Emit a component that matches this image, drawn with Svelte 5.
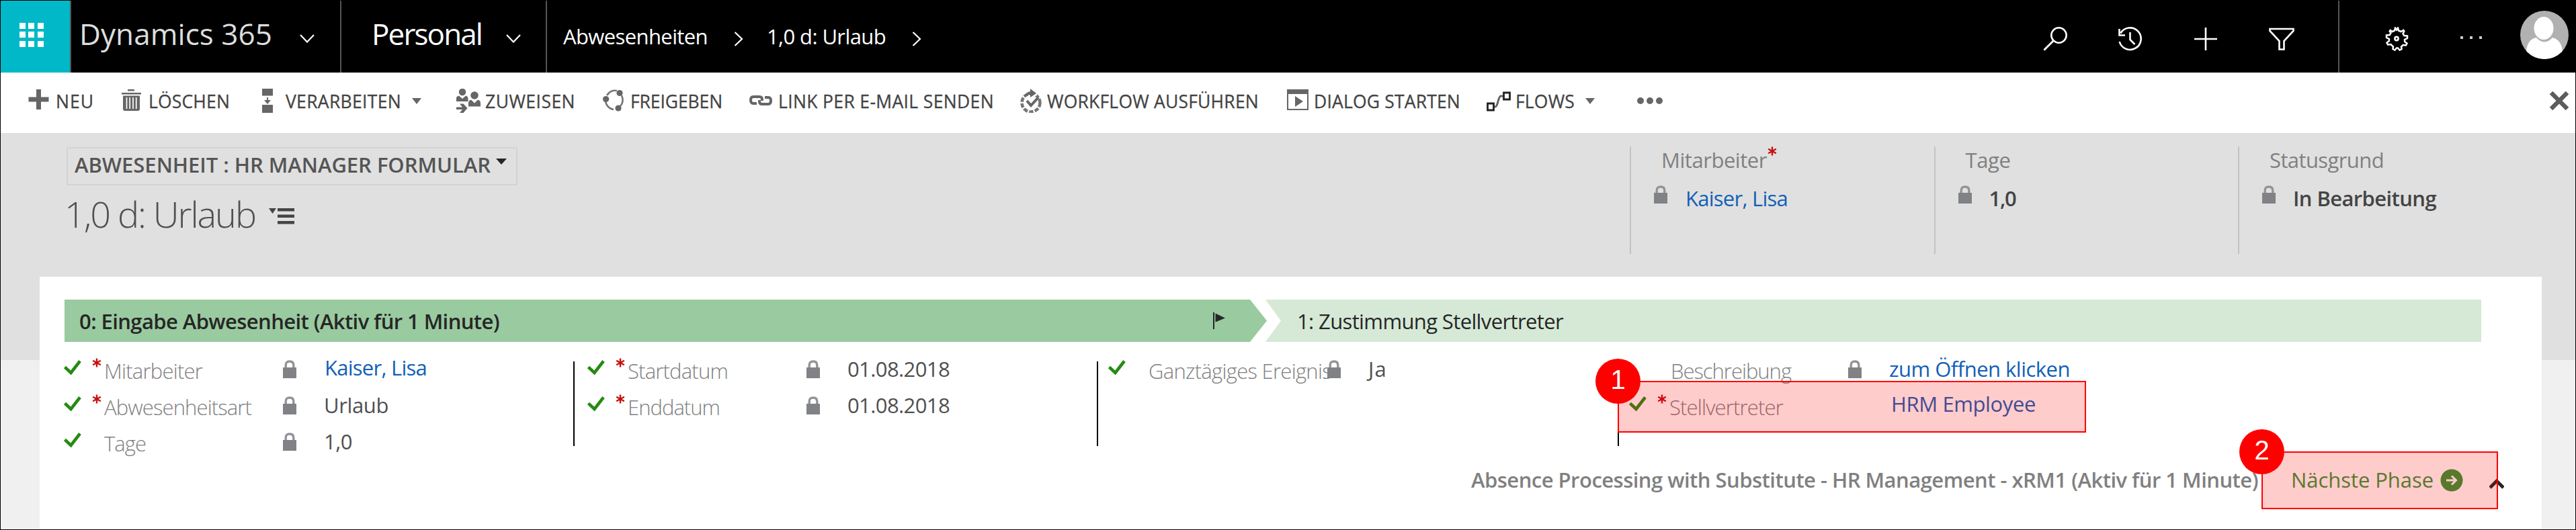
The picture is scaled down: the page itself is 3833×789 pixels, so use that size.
<script lang="ts">
	interface Command {
		icon: string;
		label: string;
		width: number; // whole slot, up to the next command
		iconSlot: number;
		textWidth: number;
		menu?: boolean;
	}

	interface Field {
		label: string;
		labelWidth: number;
		value: string;
		valueWidth: number;
		required?: boolean;
		done?: boolean;
		locked?: boolean;
		link?: boolean;
		indent?: number;
		valueIndent?: number;
		lift?: number;
	}

	const commands: Command[] = [
		{ icon: 'plus', label: 'NEU', width: 139, iconSlot: 41, textWidth: 57 },
		{ icon: 'trash', label: 'LÖSCHEN', width: 209, iconSlot: 40, textWidth: 121 },
		{ icon: 'process', label: 'VERARBEITEN', width: 289, iconSlot: 35, textWidth: 172, menu: true },
		{ icon: 'assign', label: 'ZUWEISEN', width: 218, iconSlot: 43, textWidth: 134 },
		{ icon: 'share', label: 'FREIGEBEN', width: 218, iconSlot: 41, textWidth: 137 },
		{ icon: 'link', label: 'LINK PER E-MAIL SENDEN', width: 403, iconSlot: 43, textWidth: 321 },
		{ icon: 'workflow', label: 'WORKFLOW AUSFÜHREN', width: 397, iconSlot: 40, textWidth: 315 },
		{ icon: 'dialog', label: 'DIALOG STARTEN', width: 297, iconSlot: 40, textWidth: 218 },
		{ icon: 'flow', label: 'FLOWS', width: 224, iconSlot: 43, textWidth: 88, menu: true }
	];

	const headerFields = [
		{ label: 'Mitarbeiter', labelWidth: 157, value: 'Kaiser, Lisa', valueWidth: 152, required: true, link: true },
		{ label: 'Tage', labelWidth: 67, value: '1,0', valueWidth: 40 },
		{ label: 'Statusgrund', labelWidth: 170, value: 'In Bearbeitung', valueWidth: 213 }
	];

	const columns: Field[][] = [
		[
			{ label: 'Mitarbeiter', labelWidth: 146, value: 'Kaiser, Lisa', valueWidth: 152, required: true, done: true, locked: true, link: true, valueIndent: 1, lift: 4 },
			{ label: 'Abwesenheitsart', labelWidth: 219, value: 'Urlaub', valueWidth: 96, required: true, done: true, locked: true },
			{ label: 'Tage', labelWidth: 62, value: '1,0', valueWidth: 42, done: true, locked: true }
		],
		[
			{ label: 'Startdatum', labelWidth: 149, value: '01.08.2018', valueWidth: 152, required: true, done: true, locked: true },
			{ label: 'Enddatum', labelWidth: 137, value: '01.08.2018', valueWidth: 152, required: true, done: true, locked: true }
		],
		[{ label: 'Ganztägiges Ereignis', labelWidth: 272, value: 'Ja', valueWidth: 28, done: true, locked: true }],
		[
			{ label: 'Beschreibung', labelWidth: 179, value: 'zum Öffnen klicken', valueWidth: 269, locked: true, link: true, indent: 2, lift: -1 },
			{ label: 'Stellvertreter', labelWidth: 169, value: 'HRM Employee', valueWidth: 215, required: true, done: true, link: true, valueIndent: 3, lift: 5 }
		]
	];

	// Spreads the letters so that the text takes up the given width
	function fit(node: HTMLElement, width: number) {
		const count = (node.textContent ?? '').length;
		const natural = node.getBoundingClientRect().width;
		node.style.letterSpacing = `${(width - natural) / count}px`;
	}
</script>

{#snippet lock()}
	<svg class="lock" viewBox="0 0 20 27" width="20" height="27">
		<path d="M4.200 12V7.500C4.200 3.700 6.400 2 10 2s5.800 1.700 5.800 5.500V12" fill="none" stroke="#929497" stroke-width="3.400" />
		<path d="M0 11h20v16H0z" fill="#808285" />
	</svg>
{/snippet}

{#snippet asterisk()}
	<svg class="asterisk" viewBox="0 0 14 14" width="14" height="14">
		<path d="M7 .5v13M1.200 3.700l11.600 6.600M12.800 3.700L1.200 10.300" stroke="#c8100c" stroke-width="2.400" />
	</svg>
{/snippet}

{#snippet chevronDown()}
	<svg viewBox="0 0 22 13" width="22" height="13">
		<path d="M1 1l10 10.500L21 1" fill="none" stroke="#fff" stroke-width="2.200" />
	</svg>
{/snippet}

{#snippet chevronRight()}
	<svg viewBox="0 0 14 22" width="14" height="22">
		<path d="M1.500 1L12 11 1.500 21" fill="none" stroke="#fff" stroke-width="2.200" />
	</svg>
{/snippet}

{#snippet commandIcon(name: string)}
	<svg viewBox="0 0 36 36" width="36" height="36" fill="#666">
		{#if name === 'plus'}
			<path d="M12 1h7v11.500h11.500v7H19V31h-7V19.500H.5v-7H12z" />
		{:else if name === 'trash'}
			<path d="M9 1h10v2.500H9zM0 6h29v2.500H0zM2 10.500h25V30q0 3-3 3H5q-3 0-3-3z" />
			<path d="M7.500 13v17M12.200 13v17M17 13v17M21.700 13v17" stroke="#fff" stroke-width="1.700" />
		{:else if name === 'process'}
			<path d="M0 0h16v10.500H0zM0 24h16v12H0zM7 13h2v4h4l-5 6-5-6h4z" />
		{:else if name === 'assign'}
			<circle cx="9" cy="5" r="5.200" />
			<path d="M0 19v-6q1-2 4-2.500l5 4.500 5-4.500q3 .5 3.500 4V19z" />
			<circle cx="27" cy="10" r="5.800" />
			<path d="M18 26.500v-5q0-4 4-5l5 5 5-5q4 1 4 5v5z" />
			<path d="M0 27.500h9L5 22.500h5.500l6 6.500-6 7H5l4-5H0z" />
		{:else if name === 'share'}
			<g fill="none" stroke="#777" stroke-width="2.600">
				<path d="M6 10a14 14 0 0 1 15-7" />
				<path d="M28 10a15 15 0 0 1-2 16" />
				<path d="M16 31A14 14 0 0 1 4 18" />
			</g>
			<circle cx="25" cy="6.500" r="4.600" />
			<circle cx="4.600" cy="15.500" r="4.600" />
			<circle cx="23" cy="29" r="4.600" />
		{:else if name === 'link'}
			<g fill="none" stroke="#666" stroke-width="4">
				<path d="M11 22H6q-4 0-4-5t4-5h9q4 0 4 4v2" />
				<path d="M23 13h5q4 0 4 5t-4 5h-9q-4 0-4-4v-2" />
			</g>
		{:else if name === 'workflow'}
			<circle cx="16" cy="21" r="13.500" fill="none" stroke="#777" stroke-width="4.500" stroke-dasharray="6.500 2.200" />
			<path d="M9 1h16v9l-7 3z" fill="#fff" />
			<path d="M15 0l9 7-9 6V9q-5 0-9 4 2-8 9-9z" />
			<path d="M10 18l6 7 11-12" fill="none" stroke="#666" stroke-width="4" />
		{:else if name === 'dialog'}
			<path d="M1 2h30v29H1z" fill="#fff" stroke="#666" stroke-width="2" />
			<path d="M1 1h30v7H1zM12 11l12 8-12 8z" />
		{:else if name === 'flow'}
			<path d="M10 27h2.500C17 27 17 12 21 11h4" fill="none" stroke="#666" stroke-width="3" />
			<path d="M1.500 22h9v10h-9zM25.500 6h9v10h-9z" fill="#fff" stroke="#222" stroke-width="2.800" />
		{/if}
	</svg>
{/snippet}

<div class="window">
	<header class="topbar">
		<div class="waffle">
			{#each Array(9) as _}
				<i></i>
			{/each}
		</div>
		<div class="product">
			<span class="brand" use:fit={287}>Dynamics 365</span>
			{@render chevronDown()}
		</div>
		<div class="area">
			<span class="area-name" use:fit={164}>Personal</span>
			{@render chevronDown()}
		</div>
		<nav class="crumbs">
			<span class="crumb first" use:fit={215}>Abwesenheiten</span>
			{@render chevronRight()}
			<span class="crumb" use:fit={177}>1,0 d: Urlaub</span>
			{@render chevronRight()}
		</nav>
		<div class="tools">
			<svg viewBox="0 0 36 36" width="36" height="36">
				<ellipse cx="23.500" cy="12.500" rx="11.200" ry="11.200" />
				<path d="M15.500 20.500L1.500 34.500" stroke-width="3" />
			</svg>
			<svg viewBox="0 0 36 36" width="36" height="36">
				<path d="M3.300 9.500A16.300 16.300 0 1 1 1.700 22M1.500 3v9.500H10M17.500 8v11l7 7" />
			</svg>
			<svg viewBox="0 0 36 36" width="36" height="36">
				<path d="M18 1v34M1 18h34" />
			</svg>
			<svg viewBox="0 0 38 34" width="38" height="34">
				<path d="M1.500 2h35v3L22.500 20v12.500h-7V20L1.500 5z" />
			</svg>
		</div>
		<div class="account">
			<svg viewBox="0 0 36 36" width="36" height="36">
				<path d="M15 5.500l1-4 2 3 2-3 1 4 3.500 1.500 3.800-2 1 1.500-1.800 3.600 1.800 3 4.700.4v3.500l-4 2 .2 3 3.300 2.500-1.500 3-4.500-.5-2.500 2.500.5 3.500-3 1.500-2.500-3h-2l-2.500 3-3-1.500.5-3.500L9.500 26 5 26.500l-1.500-3L6.800 21l.2-3-4-2v-3.500l4.700-.4 1.800-3L7.700 6.500 8.700 5l3 2z" stroke-width="2.500" />
				<circle cx="18" cy="17.500" r="2.600" />
			</svg>
			<div class="more-dots"><i></i><i></i><i></i></div>
			<svg class="avatar" viewBox="0 0 72 72" width="72" height="72">
				<defs><clipPath id="face"><circle cx="36" cy="36" r="36" /></clipPath></defs>
				<g clip-path="url(#face)">
					<path d="M0 0h72v72H0z" fill="#b1b1b1" />
					<path d="M9 72V60q2-18 15-20 12 13 24 0 13 3 15 20v12z" fill="#fff" />
					<ellipse cx="35" cy="26" rx="14.500" ry="17" fill="#fff" />
				</g>
			</svg>
		</div>
	</header>

	<div class="commandbar">
		{#each commands as command}
			<div class="command" style="width: {command.width}px">
				<span class="command-icon" style="width: {command.iconSlot}px">{@render commandIcon(command.icon)}</span>
				<span class="command-label" use:fit={command.textWidth}>{command.label}</span>
				{#if command.menu}<i class="caret"></i>{/if}
			</div>
		{/each}
		<div class="overflow"><i></i><i></i><i></i></div>
		<svg class="close" viewBox="0 0 30 30" width="30" height="30">
			<path d="M3 3l24 24M27 3L3 27" stroke="#5c5c5c" stroke-width="6.500" />
		</svg>
	</div>

	<main class="record">
		<section class="record-head">
			<div class="titles">
				<div class="form-selector">
					<span use:fit={619}>ABWESENHEIT : HR MANAGER FORMULAR</span>
					<i class="caret dark"></i>
				</div>
				<div class="title-row">
					<h1 use:fit={284}>1,0 d: Urlaub</h1>
					<svg viewBox="0 0 38 24" width="38" height="24" fill="#444">
						<path d="M0 0h11L5.500 8zM13 0h25v4.500H13zM13 9.500h25V14H13zM13 19h25v4.500H13z" />
					</svg>
				</div>
			</div>
			{#each headerFields as field}
				<div class="head-field">
					<div class="head-label">
						<span use:fit={field.labelWidth}>{field.label}</span>
						{#if field.required}{@render asterisk()}{/if}
					</div>
					<div class="head-value" class:link={field.link}>
						{@render lock()}
						<span use:fit={field.valueWidth}>{field.value}</span>
					</div>
				</div>
			{/each}
		</section>

		<section class="process">
			<div class="stages">
				<div class="stage active">
					<span use:fit={625}>0: Eingabe Abwesenheit (Aktiv für 1 Minute)</span>
					<svg viewBox="0 0 18 25" width="18" height="25" fill="#262626">
						<path d="M0 0h2v25H0zM3.500 1.500L18 8.500 3.500 14.500z" />
					</svg>
				</div>
				<div class="stage next">
					<span use:fit={396}>1: Zustimmung Stellvertreter</span>
				</div>
			</div>

			<div class="columns">
				{#each columns as fields}
					<div class="column">
						{#each fields as field}
							<div class="field">
								<span class="cell">
									{#if field.done}
										<svg class="check" viewBox="0 0 26 22" width="26" height="22">
											<path d="M1.500 10.500L10.500 19 24 1.500" fill="none" stroke="#258b12" stroke-width="4.600" />
										</svg>
									{/if}
								</span>
								<span class="cell">{#if field.required}{@render asterisk()}{/if}</span>
								<span class="field-label" style="padding-left: {field.indent ?? 0}px">
									<span use:fit={field.labelWidth}>{field.label}</span>
								</span>
								<span class="cell">{#if field.locked}{@render lock()}{/if}</span>
								<span
									class="field-value"
									class:link={field.link}
									style="padding: 0 0 {Math.max(field.lift ?? 0, 0)}px {field.valueIndent ?? 0}px"
								>
									<span use:fit={field.valueWidth}>{field.value}</span>
								</span>
							</div>
						{/each}
					</div>
				{/each}
			</div>

			<footer class="process-foot">
				<span class="process-name" use:fit={1171}>Absence Processing with Substitute - HR Management - xRM1 (Aktiv für 1 Minute)</span>
				<span class="advance" use:fit={212}>Nächste Phase</span>
				<svg class="go" viewBox="0 0 34 34" width="34" height="34">
					<circle cx="17" cy="17" r="16.500" fill="#2f9838" />
					<path d="M9 17h14M17 10.500l6.500 6.500-6.500 6.500" fill="none" stroke="#fff" stroke-width="3" />
				</svg>
				<svg class="collapse" viewBox="0 0 22 16" width="22" height="16">
					<path d="M1 14L11 4l10 10" fill="none" stroke="#262626" stroke-width="5" />
				</svg>
			</footer>
		</section>
	</main>

	<!-- Step markers lying over the form -->
	<div class="marker substitute"><b>1</b></div>
	<div class="marker phase"><b>2</b></div>
</div>

<style>
	:global(body) {
		margin: 0;
	}

	.window {
		position: relative;
		display: flex;
		flex-direction: column;
		box-sizing: border-box;
		width: 3833px;
		height: 789px;
		border: 1px solid #000;
		background: #fff;
		color: #444;
		font-family: 'Open Sans', 'Noto Sans', sans-serif;
		font-size: 31px;
		line-height: 42px;
		white-space: nowrap;
	}

	svg {
		display: block;
		flex: none;
	}

	span {
		flex: none;
	}

	/* Top bar */
	.topbar {
		display: flex;
		height: 107px;
		flex: none;
		background: #000;
		color: #fff;
	}

	.waffle {
		display: grid;
		grid-template-columns: repeat(3, 9px);
		grid-auto-rows: 9px;
		gap: 4.5px;
		align-content: center;
		justify-content: center;
		box-sizing: border-box;
		width: 105px;
		padding: 0 12px 6px 0;
		border-right: 2px solid #555;
		background: #00b8c7;
	}

	.waffle i {
		background: #fff;
	}

	.product,
	.area,
	.crumbs {
		display: flex;
		align-items: center;
		box-sizing: border-box;
	}

	.product {
		width: 402px;
		padding-left: 12px;
		border-right: 2px solid #555;
	}

	.product svg,
	.area svg {
		margin-top: 6px;
	}

	.product svg {
		margin-left: 41px;
	}

	.brand {
		padding-bottom: 10px;
		color: #ddd;
		font-size: 44px;
		line-height: 60px;
	}

	.area {
		width: 306px;
		padding-left: 45px;
		border-right: 2px solid #555;
	}

	.area-name {
		padding-bottom: 10px;
		font-size: 44px;
		line-height: 60px;
	}

	.area svg {
		margin-left: 36px;
	}

	.crumbs {
		padding-left: 24px;
	}

	.crumb {
		margin-left: 35px;
		padding-bottom: 2px;
	}

	.crumb.first {
		margin-left: 0;
	}

	.crumbs svg {
		margin: 7px 0 0 39px;
	}

	.tools {
		display: flex;
		gap: 76px;
		align-items: center;
		box-sizing: border-box;
		margin-left: auto;
		padding: 7px 65px 0 0;
		border-right: 2px solid #555;
	}

	.tools svg,
	.account svg {
		fill: none;
		stroke: #fff;
		stroke-width: 2.6;
	}

	.account {
		display: flex;
		align-items: center;
		padding: 0 10px 0 67px;
	}

	.account svg:first-child {
		margin-top: 6px;
	}

	.more-dots {
		display: flex;
		gap: 10px;
		margin: 2px 57px 0 77px;
	}

	.more-dots i {
		width: 4px;
		height: 4px;
		background: #ccc;
	}

	.account .avatar {
		margin-top: -6px;
		stroke: none;
	}

	/* Command bar */
	.commandbar {
		display: flex;
		align-items: center;
		box-sizing: border-box;
		height: 90px;
		flex: none;
		padding: 0 9px 6px 41px;
		background: #fff;
		font-size: 26.5px;
		-webkit-text-stroke: 0.3px #444;
	}

	.command {
		display: flex;
		flex: none;
		align-items: center;
	}

	.command-label {
		padding-top: 2px;
	}

	.caret {
		flex: none;
		width: 0;
		height: 0;
		margin-left: 16px;
		border: 7px solid transparent;
		border-top: 9px solid #666;
		border-bottom: 0;
	}

	.caret.dark {
		margin: -8px 0 0 8px;
		border-width: 9px 8px 0;
		border-top-color: #262626;
	}

	.overflow {
		display: flex;
		gap: 4px;
	}

	.overflow i {
		width: 10px;
		height: 10px;
		border-radius: 50%;
		background: #666;
	}

	.close {
		margin-left: auto;
	}

	/* Record */
	.record {
		flex: 1;
		background: linear-gradient(#e0e0e0 338px, #f0f0f0 338px);
	}

	.record-head {
		display: flex;
		height: 214px;
	}

	.titles {
		box-sizing: border-box;
		width: 2424px;
		padding: 21px 0 0 98px;
	}

	.form-selector {
		display: flex;
		align-items: center;
		box-sizing: border-box;
		width: 671px;
		height: 57px;
		padding: 0 0 6px 10px;
		border: 2px solid #d3d3d3;
		color: #555;
		font-weight: 600;
	}

	.title-row {
		display: flex;
		gap: 20px;
		align-items: center;
	}

	h1 {
		margin: 5px 0 0 -3px;
		color: #505050;
		font-size: 54px;
		font-weight: 300;
		line-height: 74px;
	}

	.title-row svg {
		margin-top: 12px;
	}

	.head-field {
		box-sizing: border-box;
		width: 452.5px;
		height: 160px;
		margin-top: 20px;
		padding-left: 34px;
		border-left: 2px solid #bfc3c6;
	}

	.head-label {
		display: flex;
		height: 36px;
		padding-left: 11px;
		color: #808080;
		line-height: 42px;
	}

	.head-label span {
		margin-top: -1px;
	}

	.head-label .asterisk {
		margin-left: 1px;
	}

	.head-value {
		display: flex;
		gap: 26px;
		align-items: center;
		margin-top: 20px;
		color: #444;
		font-weight: 600;
	}

	.head-value .lock {
		margin-bottom: 12px;
	}

	.head-value.link {
		gap: 27px;
		color: #1160b7;
		font-weight: 400;
	}

	.process {
		box-sizing: border-box;
		width: 3723px;
		height: 376px;
		margin-left: 58px;
		padding: 34px 0 0 37px;
		background: #fff;
	}

	.stages {
		display: flex;
		width: 3596px;
		height: 63px;
		color: #262626;
	}

	.stage {
		display: flex;
		align-items: center;
		justify-content: space-between;
		box-sizing: border-box;
	}

	.stage.active {
		width: 1789px;
		padding: 0 62px 0 22px;
		background: #9aca9f;
		font-weight: 600;
		clip-path: polygon(0 0, 1764px 0, 100% 50%, 1764px 100%, 0 100%);
	}

	.stage.next {
		flex: 1;
		margin-left: -2px;
		padding-left: 47px;
		background: #d5e9d6;
		clip-path: polygon(0 0, 100% 0, 100% 100%, 0 100%, 23px 50%);
	}

	.columns {
		display: flex;
		height: 126px;
		margin: 29px 0 0 -1px;
	}

	.column {
		box-sizing: border-box;
		width: 775px;
		padding-left: 15px;
		border-left: 2px solid #000;
	}

	.column:first-child {
		width: 758px;
		padding-left: 0;
		border: 0;
	}

	.column:nth-child(2) {
		width: 779px;
		padding-left: 19px;
	}

	.column:last-child {
		width: 900px;
	}

	.field {
		display: grid;
		grid-template-columns: 42px 18px 266px 61px 1fr;
		align-items: center;
		height: 54px;
	}

	.field:first-child {
		margin-top: -16px;
	}

	.check {
		margin-bottom: 4px;
	}

	.field .asterisk {
		margin-bottom: 19px;
	}

	.field-label {
		padding-top: 5px;
		color: #808080;
		font-weight: 300;
	}

	.field-value {
		color: #505050;
	}

	.field-value.link {
		color: #1160b7;
	}

	.field-label span,
	.field-value span {
		display: inline-block;
	}

	.process-foot {
		display: flex;
		align-items: center;
		justify-content: flex-end;
		height: 98px;
		padding: 1px 56px 0 0;
	}

	.process-name {
		margin-right: 49px;
		color: #808080;
		font-weight: 600;
	}

	.advance {
		margin-right: 10px;
		color: #2f9838;
	}

	.go {
		margin-top: 2px;
	}

	.collapse {
		margin: 11px 0 0 39px;
	}

	.marker {
		position: absolute;
		box-sizing: border-box;
		border: 2px solid #f00;
		background: rgba(255, 0, 0, 0.2);
	}

	.marker.substitute {
		top: 566px;
		left: 2406px;
		width: 697px;
		height: 77px;
	}

	.marker.phase {
		top: 671px;
		left: 3364px;
		width: 352px;
		height: 86px;
	}

	.marker b {
		position: absolute;
		top: -35px;
		left: -35px;
		width: 67px;
		height: 67px;
		border-radius: 50%;
		background: #f00;
		color: #fff;
		font: 400 40px/62px 'Liberation Sans', sans-serif;
		text-align: center;
	}
</style>
